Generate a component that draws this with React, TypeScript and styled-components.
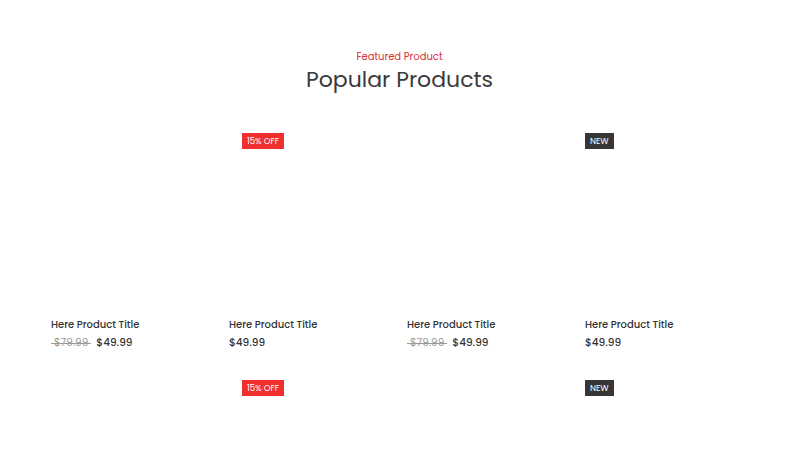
import React from "react";
import styled, {createGlobalStyle} from "styled-components";

const GlobalStyle = createGlobalStyle`
    body {
        margin: 0;
        background: #FFFFFF;
        font-family: "Poppins", Inter, "Liberation Sans", sans-serif;
    }
`;

const Section = styled.section`
    width: 800px;
    height: 450px;
    overflow: hidden;
    padding: 49px 52px 0 51px;
    box-sizing: border-box;
`;

const Heading = styled.div`
    text-align: center;
    margin-bottom: 39px;
`;

const SubTitle = styled.p`
    margin: 0 0 1px;
    color: #D8303C;
    font-size: 10px;
    line-height: 16px;
`;

const Title = styled.h2`
    margin: 0;
    color: #3A3A3A;
    font-size: 22px;
    font-weight: 400;
    line-height: 28px;
`;

const Grid = styled.div`
    display: grid;
    grid-template-columns: repeat(4, 1fr);
    column-gap: 15px;
    row-gap: 29px;
`;

const Card = styled.div`
    display: flex;
    flex-direction: column;
`;

const Thumb = styled.div`
    position: relative;
    height: 176px;
    margin-bottom: 8px;
`;

const Badge = styled.span<{$tone: "sale" | "new"; $offset: number}>`
    position: absolute;
    top: 0;
    left: ${p => p.$offset}px;
    height: 16px;
    padding: 0 5px;
    display: flex;
    align-items: center;
    font-size: 8.5px;
    color: #FFFFFF;
    background: ${p => p.$tone === "sale" ? "#F0302F" : "#363636"};
`;

const ProductName = styled.div`
    color: #333333;
    font-size: 10px;
    font-weight: 500;
    line-height: 16px;
`;

const PriceRow = styled.div`
    display: flex;
    gap: 5px;
    margin-top: 2px;
    font-size: 10.5px;
    line-height: 16px;
`;

const OldPrice = styled.span`
    position: relative;
    color: #9A9A9A;
    padding: 0 3px;

    &::after {
        content: "";
        position: absolute;
        left: 0;
        right: 0;
        top: 8px;
        height: 1px;
        background: #9A9A9A;
    }
`;

const Price = styled.span`
    color: #333333;
    font-weight: 500;
`;

type Product = {
    old?: string;
    price: string;
    badge?: {tone: "sale" | "new"; label: string; offset: number};
};

const products: Product[] = [
    {old: "$79.99", price: "$49.99"},
    {price: "$49.99", badge: {tone: "sale", label: "15% OFF", offset: 13}},
    {old: "$79.99", price: "$49.99"},
    {price: "$49.99", badge: {tone: "new", label: "NEW", offset: 0}},
];

const App = () => {
    const rows = [...products, ...products];

    return (
        <>
            <GlobalStyle/>
            <Section>
                <Heading>
                    <SubTitle>Featured Product</SubTitle>
                    <Title>Popular Products</Title>
                </Heading>
                <Grid>
                    {rows.map((p, i) => (
                        <Card key={i}>
                            <Thumb>
                                {p.badge && <Badge $tone={p.badge.tone} $offset={p.badge.offset}>{p.badge.label}</Badge>}
                            </Thumb>
                            <ProductName>Here Product Title</ProductName>
                            <PriceRow>
                                {p.old && <OldPrice>{p.old}</OldPrice>}
                                <Price>{p.price}</Price>
                            </PriceRow>
                        </Card>
                    ))}
                </Grid>
            </Section>
        </>
    );
}

export default App;
